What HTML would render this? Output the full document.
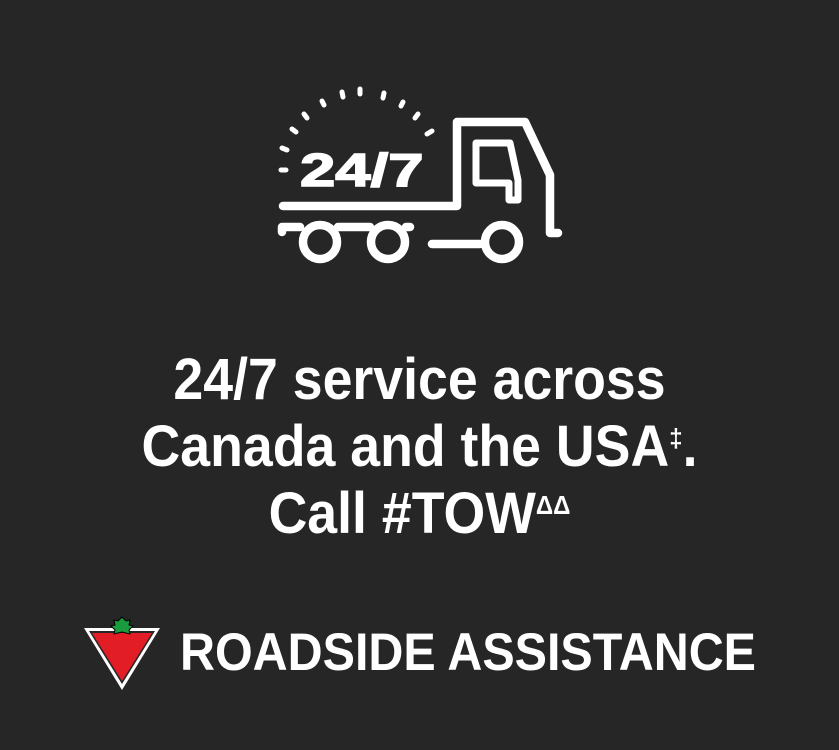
<!DOCTYPE html>
<html><head><style>
body{margin:0;width:839px;height:750px;background:#262626;overflow:hidden;position:relative;font-family:"Liberation Sans",sans-serif;color:#fff}
.h{position:absolute;left:0;width:839px;text-align:center;font-weight:bold;font-size:58px;line-height:67px;top:346px}
.h span{display:inline-block;transform:scaleX(.925);transform-origin:center}
sup{font-size:26px;vertical-align:top;position:relative;top:-8px}
.r{position:absolute;left:180px;top:622px;font-weight:bold;font-size:53px;white-space:nowrap;transform:scaleX(.914);transform-origin:left}
</style></head><body>
<svg width="839" height="750" style="position:absolute;left:0;top:0">
<g stroke="#fff" stroke-width="8.5" stroke-linecap="round" stroke-linejoin="round" fill="none">
<path d="M283 206H457V122H525L550 175V233H558"/>
<path d="M476 143H510L518 180V200H509V183H476Z" stroke-width="7"/>
<path d="M282 232V227H300M338 227H370M406 227H410"/>
<path d="M432 244H480"/>
<circle cx="320" cy="242" r="17"/><circle cx="388" cy="242" r="17"/><circle cx="502" cy="242" r="17"/>
<g stroke-width="5">
<path d="M281 170h5M282 148l5 2M292 129l4 3M304 114l3 4M322 101l2 4M342 92l1 5M360 89v5M384 93l-1 5M403 102l-2 4M418 114l-3 4M432 131l-5 3"/>
</g></g>
<text x="0" y="0" transform="translate(300 186) scale(1.38 1)" font-family="Liberation Sans" font-weight="bold" font-size="46" fill="#fff" stroke="#fff" stroke-width="1.5">24/7</text>
<path d="M84 628H160L122 690Z" fill="#fff"/>
<path d="M89 631H155L122 684Z" fill="#262626"/>
<path d="M92 633H152L122 681Z" fill="#e31d25"/>
<path d="M122 617l4 4 4-1-1 5 4 1-4 4 1 4-8-2-8 2 1-4-4-4 4-1-1-5 4 1z" fill="#1a9b3e" stroke="#000" stroke-width="1"/>
</svg>
<div class="h"><span>24/7 service across<br>Canada and the USA<sup>‡</sup>.<br>Call #TOW<sup>ΔΔ</sup></span></div>
<div class="r">ROADSIDE ASSISTANCE</div>
</body></html>
